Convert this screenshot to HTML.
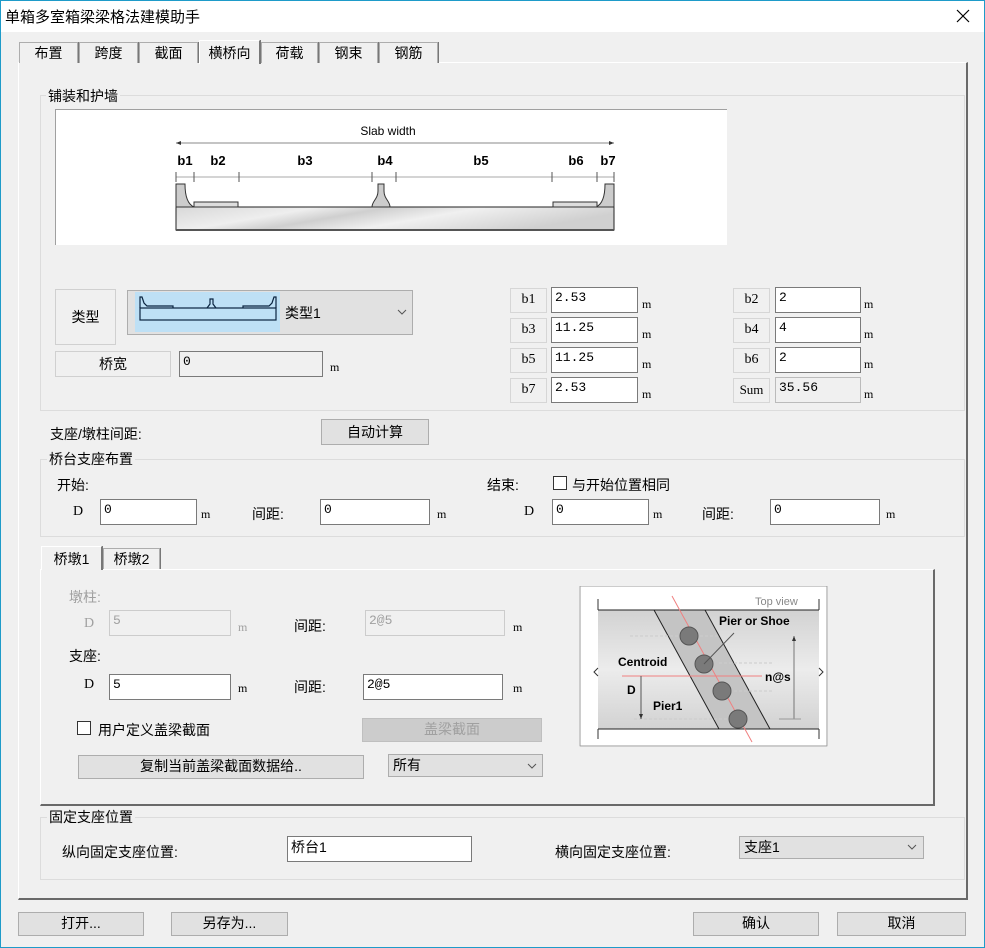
<!DOCTYPE html>
<html><head><meta charset="utf-8">
<style>
*{box-sizing:border-box;margin:0;padding:0}
body{width:985px;height:948px;overflow:hidden;background:#f0f0f0;font-family:"Liberation Sans","Noto Sans CJK SC",sans-serif;font-size:14px;color:#000;position:relative}
.a{position:absolute;white-space:nowrap}
.win{position:absolute;left:0;top:0;width:985px;height:948px;border:1px solid #1e9bc9}
.title{position:absolute;left:1px;top:1px;width:983px;height:31px;background:#fff}
.tab{position:absolute;top:42px;height:21px;border:1px solid #adadad;border-bottom:none;background:#f0f0f0;text-align:center;line-height:20px;box-shadow:1px 0 0 #777}
.grp{position:absolute;border:1px solid #dcdcdc}
.gl{position:absolute;background:#f0f0f0;padding:0 2px;line-height:16px}
.inp{position:absolute;background:#fff;border:1px solid #7a7a7a;font-family:"Liberation Mono","Noto Sans CJK SC",monospace;font-size:13px;padding:1px 3px;line-height:18px}
.lbl{position:absolute;border:1px solid #d6d6d6;background:#f0f0f0;text-align:center;font-family:"Liberation Serif",serif;font-size:14px;line-height:22px}
.m{position:absolute;font-family:"Liberation Serif",serif;font-size:12px}
.btn{position:absolute;background:#e1e1e1;border:1px solid #adadad;text-align:center;line-height:21px}
.cb{position:absolute;width:14px;height:14px;border:1px solid #333;background:#fff}
.gray{color:#a0a0a0}
</style></head><body>
<div class="win"></div>
<div class="title"></div>
<div class="a" style="left:5px;top:6px;font-size:15px">单箱多室箱梁梁格法建模助手</div>
<svg class="a" style="left:956px;top:9px" width="14" height="14"><path d="M1 1L13 13M13 1L1 13" stroke="#000" stroke-width="1.2"/></svg>

<!-- tab page -->
<div class="a" style="left:18px;top:62px;width:950px;height:838px;border:1px solid #fff;border-right:2px solid #696969;border-bottom:2px solid #696969;border-top-color:#fff;border-left-color:#fff"></div>
<div class="tab" style="left:19px;width:59px">布置</div>
<div class="tab" style="left:79px;width:59px">跨度</div>
<div class="tab" style="left:139px;width:59px">截面</div>
<div class="tab" style="left:199px;top:40px;height:24px;width:61px;border-color:#fff #777 transparent #fff;line-height:24px">横桥向</div>
<div class="tab" style="left:261px;width:57px">荷载</div>
<div class="tab" style="left:319px;width:59px">钢束</div>
<div class="tab" style="left:379px;width:59px">钢筋</div>

<!-- group 1 -->
<div class="grp" style="left:40px;top:95px;width:925px;height:316px"></div>
<div class="gl" style="left:46px;top:88px">铺装和护墙</div>
<div class="a" style="left:55px;top:109px;width:672px;height:136px;background:#fff;border-top:1px solid #a0a0a0;border-left:1px solid #a0a0a0"></div>
<svg class="a" style="left:55px;top:109px" width="672" height="136">
<defs><linearGradient id="g" x1="0" x2="1" y1="0" y2="0.3"><stop offset="0" stop-color="#d8d8d8"/><stop offset=".3" stop-color="#eee"/><stop offset=".45" stop-color="#cfcfcf"/><stop offset=".65" stop-color="#f0f0f0"/><stop offset="1" stop-color="#d0d0d0"/></linearGradient></defs>
<text x="333" y="26" font-family="Liberation Sans" font-size="12" text-anchor="middle">Slab width</text>
<line x1="121" y1="34" x2="559" y2="34" stroke="#888"/>
<path d="M121 34l5-2v4zM559 34l-5-2v4z" fill="#333"/>
<g font-family="Liberation Sans" font-size="13" font-weight="bold" text-anchor="middle">
<text x="130" y="56">b1</text><text x="163" y="56">b2</text><text x="250" y="56">b3</text><text x="330" y="56">b4</text><text x="426" y="56">b5</text><text x="521" y="56">b6</text><text x="553" y="56">b7</text></g>
<line x1="121" y1="68" x2="559" y2="68" stroke="#aaa"/>
<g stroke="#555"><line x1="121" y1="63" x2="121" y2="73"/><line x1="139" y1="63" x2="139" y2="73"/><line x1="184" y1="63" x2="184" y2="73"/><line x1="317" y1="63" x2="317" y2="73"/><line x1="341" y1="63" x2="341" y2="73"/><line x1="497" y1="63" x2="497" y2="73"/><line x1="542" y1="63" x2="542" y2="73"/><line x1="559" y1="63" x2="559" y2="73"/></g>
<rect x="121" y="98" width="438" height="23" fill="url(#g)" stroke="#222"/>
<line x1="121" y1="121" x2="559" y2="121" stroke="#555" stroke-width="2"/>
<path d="M121 98V75h9c0 10 2 20 9 23z" fill="#ccc" stroke="#333"/>
<path d="M559 98V75h-9c0 10-2 20-9 23z" fill="#ccc" stroke="#333"/>
<path d="M317 98c0-6 6-8 6-16v-7h6v7c0 8 6 10 6 16z" fill="#ccc" stroke="#333"/>
<rect x="139" y="93" width="44" height="5" fill="#ddd" stroke="#333"/>
<rect x="498" y="93" width="44" height="5" fill="#ddd" stroke="#333"/>
</svg>

<div class="a" style="left:55px;top:289px;width:61px;height:56px;border:1px solid #d0d0d0;text-align:center;line-height:54px">类型</div>
<div class="a" style="left:127px;top:290px;width:286px;height:45px;background:#e1e1e1;border:1px solid #adadad"></div>
<div class="a" style="left:135px;top:292px;width:145px;height:40px;background:#bee0f5"></div>
<svg class="a" style="left:135px;top:292px" width="145" height="40"><g fill="none" stroke="#0a2440" stroke-width="1.2">
<rect x="5" y="16" width="136" height="12"/>
<path d="M5 16V5h2l2 6l3 3h26v2M141 16V5h-2l-2 6l-3 3h-26v2M72 16l3-4v-5h3v5l3 4"/></g></svg>
<div class="a" style="left:285px;top:303px">类型1</div>
<svg class="a" style="left:397px;top:309px" width="10" height="6"><path d="M1 1l4 4l4-4" fill="none" stroke="#555"/></svg>
<div class="a" style="left:55px;top:351px;width:116px;height:26px;border:1px solid #d0d0d0;text-align:center;line-height:24px">桥宽</div>
<div class="inp" style="left:179px;top:351px;width:144px;height:26px;background:#f0f0f0">0</div>
<div class="m" style="left:330px;top:360px">m</div>

<div class="lbl" style="left:510px;top:288px;width:37px;height:25px">b1</div><div class="inp" style="left:551px;top:287px;width:87px;height:26px">2.53</div><div class="m" style="left:642px;top:297px">m</div>
<div class="lbl" style="left:510px;top:318px;width:37px;height:25px">b3</div><div class="inp" style="left:551px;top:317px;width:87px;height:26px">11.25</div><div class="m" style="left:642px;top:327px">m</div>
<div class="lbl" style="left:510px;top:348px;width:37px;height:25px">b5</div><div class="inp" style="left:551px;top:347px;width:87px;height:26px">11.25</div><div class="m" style="left:642px;top:357px">m</div>
<div class="lbl" style="left:510px;top:378px;width:37px;height:25px">b7</div><div class="inp" style="left:551px;top:377px;width:87px;height:26px">2.53</div><div class="m" style="left:642px;top:387px">m</div>
<div class="lbl" style="left:733px;top:288px;width:37px;height:25px">b2</div><div class="inp" style="left:775px;top:287px;width:86px;height:26px">2</div><div class="m" style="left:864px;top:297px">m</div>
<div class="lbl" style="left:733px;top:318px;width:37px;height:25px">b4</div><div class="inp" style="left:775px;top:317px;width:86px;height:26px">4</div><div class="m" style="left:864px;top:327px">m</div>
<div class="lbl" style="left:733px;top:348px;width:37px;height:25px">b6</div><div class="inp" style="left:775px;top:347px;width:86px;height:26px">2</div><div class="m" style="left:864px;top:357px">m</div>
<div class="lbl" style="left:733px;top:378px;width:37px;height:25px;font-size:13px">Sum</div><div class="inp" style="left:775px;top:377px;width:86px;height:26px;background:#f0f0f0;border-color:#bbb">35.56</div><div class="m" style="left:864px;top:387px">m</div>

<div class="a" style="left:50px;top:424px">支座/墩柱间距:</div>
<div class="btn" style="left:321px;top:419px;width:108px;height:26px;line-height:24px">自动计算</div>

<!-- group 2 -->
<div class="grp" style="left:40px;top:459px;width:925px;height:78px"></div>
<div class="gl" style="left:47px;top:451px">桥台支座布置</div>
<div class="a" style="left:57px;top:475px">开始:</div>
<div class="a" style="left:73px;top:504px;font-family:'Liberation Serif'">D</div>
<div class="inp" style="left:100px;top:499px;width:97px;height:26px">0</div><div class="m" style="left:201px;top:507px">m</div>
<div class="a" style="left:252px;top:504px">间距:</div>
<div class="inp" style="left:320px;top:499px;width:110px;height:26px">0</div><div class="m" style="left:437px;top:507px">m</div>
<div class="a" style="left:487px;top:475px">结束:</div>
<div class="cb" style="left:553px;top:476px"></div>
<div class="a" style="left:572px;top:475px">与开始位置相同</div>
<div class="a" style="left:524px;top:504px;font-family:'Liberation Serif'">D</div>
<div class="inp" style="left:552px;top:499px;width:97px;height:26px">0</div><div class="m" style="left:653px;top:507px">m</div>
<div class="a" style="left:702px;top:504px">间距:</div>
<div class="inp" style="left:770px;top:499px;width:110px;height:26px">0</div><div class="m" style="left:886px;top:507px">m</div>

<!-- pier panel -->
<div class="a" style="left:40px;top:569px;width:895px;height:237px;border:1px solid #fff;border-right:2px solid #696969;border-bottom:2px solid #696969"></div>
<div class="tab" style="left:41px;top:546px;height:24px;width:61px;border-color:#fff #777 transparent #fff;line-height:24px">桥墩1</div>
<div class="tab" style="left:103px;top:548px;height:21px;width:57px">桥墩2</div>

<div class="a gray" style="left:69px;top:587px">墩柱:</div>
<div class="a gray" style="left:84px;top:616px;font-family:'Liberation Serif'">D</div>
<div class="inp gray" style="left:109px;top:610px;width:122px;height:26px;background:#f0f0f0;border-color:#ccc">5</div><div class="m gray" style="left:238px;top:620px">m</div>
<div class="a" style="left:294px;top:616px">间距:</div>
<div class="inp gray" style="left:365px;top:610px;width:140px;height:26px;background:#f0f0f0;border-color:#ccc">2@5</div><div class="m" style="left:513px;top:620px">m</div>
<div class="a" style="left:69px;top:646px">支座:</div>
<div class="a" style="left:84px;top:677px;font-family:'Liberation Serif'">D</div>
<div class="inp" style="left:109px;top:674px;width:122px;height:26px">5</div><div class="m" style="left:238px;top:681px">m</div>
<div class="a" style="left:294px;top:677px">间距:</div>
<div class="inp" style="left:363px;top:674px;width:140px;height:26px">2@5</div><div class="m" style="left:513px;top:681px">m</div>
<div class="cb" style="left:77px;top:721px"></div>
<div class="a" style="left:98px;top:720px">用户定义盖梁截面</div>
<div class="btn gray" style="left:362px;top:718px;width:180px;height:24px;background:#ccc;border-color:#bfbfbf">盖梁截面</div>
<div class="btn" style="left:78px;top:755px;width:286px;height:24px">复制当前盖梁截面数据给..</div>
<div class="a" style="left:388px;top:754px;width:155px;height:23px;background:#e1e1e1;border:1px solid #adadad;padding-left:4px;line-height:21px">所有</div>
<svg class="a" style="left:527px;top:763px" width="10" height="6"><path d="M1 1l4 4l4-4" fill="none" stroke="#555"/></svg>

<svg class="a" style="left:579px;top:586px" width="249" height="161">
<rect width="249" height="161" fill="#fff"/>
<rect x="1" y="0" width="247" height="160" fill="none" stroke="#999" stroke-width="1"/>
<defs><linearGradient id="h" x1="0" x2="0" y1="0" y2="1"><stop offset="0" stop-color="#d2d2d2"/><stop offset=".5" stop-color="#ececec"/><stop offset="1" stop-color="#d2d2d2"/></linearGradient></defs>
<rect x="19" y="24" width="221" height="119" fill="url(#h)"/>
<path d="M19 24H240M19 143H240" stroke="#222"/>
<path d="M19 13V24M19 143V153M240 13V24M240 143V153" stroke="#333"/>
<path d="M19 82l-4 4l4 4M240 82l4 4l-4 4" fill="#fff" stroke="#333"/>
<polygon points="75,24 126,24 191,143 140,143" fill="#c4c4c4" stroke="#222"/>
<g stroke="#ccc" stroke-dasharray="3 2"><line x1="51" y1="50" x2="140" y2="50"/><line x1="140" y1="77" x2="195" y2="77"/><line x1="140" y1="105" x2="195" y2="105"/><line x1="55" y1="133" x2="150" y2="133"/></g>
<line x1="43" y1="90" x2="183" y2="90" stroke="#f08080"/>
<line x1="93" y1="10" x2="173" y2="156" stroke="#f08080"/>
<g fill="#7a7a7a" stroke="#555"><circle cx="110" cy="50" r="9"/><circle cx="125" cy="78" r="9"/><circle cx="143" cy="105" r="9"/><circle cx="159" cy="133" r="9"/></g>
<line x1="125" y1="78" x2="155" y2="47" stroke="#555"/>
<line x1="215" y1="50" x2="215" y2="133" stroke="#777"/><path d="M215 50l-2 5h4z" fill="#333"/>
<line x1="200" y1="133" x2="222" y2="133" stroke="#999"/>
<line x1="62" y1="90" x2="62" y2="133" stroke="#555"/><path d="M62 133l-2-5h4z" fill="#333"/>
<g font-family="Liberation Sans" font-weight="bold" font-size="12">
<text x="140" y="39">Pier or Shoe</text><text x="39" y="80">Centroid</text><text x="186" y="95">n@s</text><text x="48" y="108">D</text><text x="74" y="124">Pier1</text></g>
<text x="176" y="19" font-family="Liberation Sans" font-size="11" fill="#888">Top view</text>
</svg>

<!-- group 3 -->
<div class="grp" style="left:40px;top:817px;width:925px;height:63px"></div>
<div class="gl" style="left:47px;top:809px">固定支座位置</div>
<div class="a" style="left:62px;top:842px">纵向固定支座位置:</div>
<div class="inp" style="left:287px;top:836px;width:185px;height:26px;font-family:'Liberation Sans','Noto Sans CJK SC',sans-serif;font-size:14px">桥台1</div>
<div class="a" style="left:555px;top:842px">横向固定支座位置:</div>
<div class="a" style="left:739px;top:836px;width:185px;height:23px;background:#e1e1e1;border:1px solid #adadad;padding-left:4px;line-height:21px">支座1</div>
<svg class="a" style="left:907px;top:844px" width="10" height="6"><path d="M1 1l4 4l4-4" fill="none" stroke="#555"/></svg>

<div class="btn" style="left:18px;top:912px;width:126px;height:24px">打开...</div>
<div class="btn" style="left:171px;top:912px;width:117px;height:24px">另存为...</div>
<div class="btn" style="left:693px;top:912px;width:126px;height:24px">确认</div>
<div class="btn" style="left:837px;top:912px;width:129px;height:24px">取消</div>
</body></html>
